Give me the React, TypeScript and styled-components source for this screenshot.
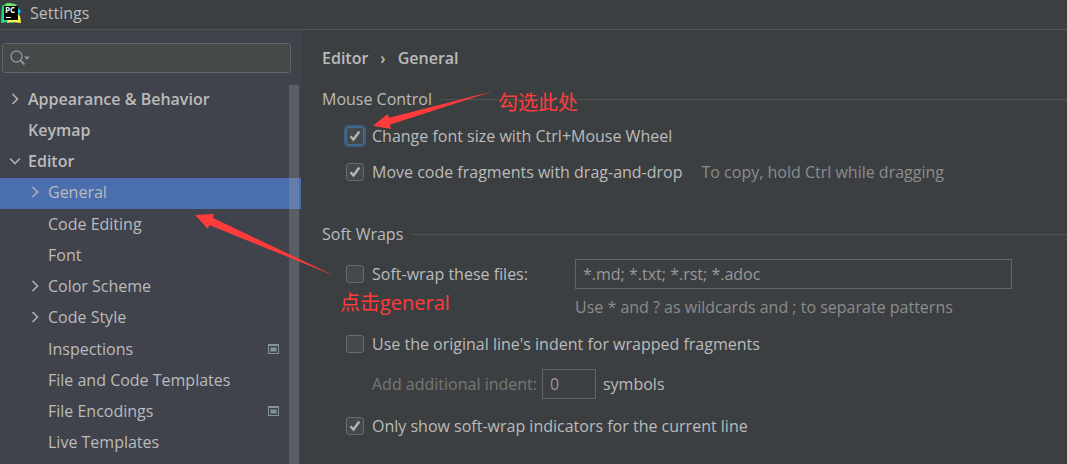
import React from "react";
import styled, { createGlobalStyle, css } from "styled-components";

const GlobalStyle = createGlobalStyle`
  * { box-sizing: border-box; }
  body {
    margin: 0;
    background: #3c3f41;
    color: #bbbbbb;
    font: 16px/20px "Open Sans", "Noto Sans CJK SC", sans-serif;
  }
  input, button { font: inherit; }
`;

const Window = styled.div`
  position: relative;
  display: flex;
  flex-direction: column;
  min-height: 100vh;
`;

const TitleBar = styled.header`
  display: flex;
  align-items: center;
  gap: 9px;
  height: 30px;
  padding: 0 0 4px 1px;
  border-bottom: 1px solid #515355;
`;

const Title = styled.h1`
  margin: 0;
  font-size: 16px;
  font-weight: 400;
`;

const Columns = styled.div`
  flex: 1;
  display: flex;
`;

const Sidebar = styled.nav`
  position: relative;
  flex: none;
  display: flex;
  flex-direction: column;
  width: 301px;
  background: #40434c;
`;

const SearchBox = styled.label`
  display: flex;
  align-items: center;
  height: 30px;
  margin: 13px 10px 11px 2px;
  padding-left: 7px;
  background: #45494a;
  border: 1px solid #646464;
  border-radius: 3px;
`;

const SearchInput = styled.input`
  flex: 1;
  min-width: 0;
  border: 0;
  outline: 0;
  background: transparent;
  color: inherit;
`;

const Tree = styled.ul`
  flex: 1;
  display: grid;
  grid-auto-rows: minmax(30px, 1fr);
  margin: 0;
  padding: 0 0 5px;
  list-style: none;
`;

const TreeItem = styled.li`
  display: grid;
`;

const TreeButton = styled.button<{ $level: number; $selected?: boolean }>`
  display: flex;
  align-items: center;
  width: 100%;
  padding: 0 22px 2px ${(p) => (p.$level ? 28 : 8)}px;
  border: 0;
  background: ${(p) => (p.$selected ? "#4b6eaf" : "transparent")};
  color: inherit;
  font-weight: ${(p) => (p.$level ? 400 : 600)};
  text-align: left;
`;

const ArrowSlot = styled.span`
  display: flex;
  width: 20px;
`;

const ItemName = styled.span`
  flex: 1;
`;

const ScrollThumb = styled.div`
  position: absolute;
  top: 55px;
  right: 2px;
  bottom: 0;
  width: 10px;
  background: rgba(166, 166, 166, 0.27);
`;

const Main = styled.main`
  flex: 1;
  min-width: 0;
  padding: 18px 0 18px 21px;
`;

const Breadcrumb = styled.div`
  display: flex;
  gap: 12px;
  font-weight: 600;
`;

const Section = styled.fieldset<{ $space: number }>`
  margin: ${(p) => p.$space}px 0 0;
  padding: 0;
  border: 0;
`;

const Legend = styled.legend`
  display: flex;
  align-items: center;
  gap: 8px;
  width: 100%;
  padding: 0;

  &::after {
    content: "";
    flex: 1;
    height: 1px;
    background: #515151;
  }
`;

const Row = styled.div<{ $space: number; $indent?: number }>`
  display: flex;
  align-items: center;
  margin-top: ${(p) => p.$space}px;
  padding-left: ${(p) => p.$indent ?? 24}px;
`;

const CheckLabel = styled.label`
  display: flex;
  align-items: center;
  gap: 8px;
  white-space: nowrap;
`;

const tick = css`
  background-image: url("data:image/svg+xml,%3Csvg xmlns='http://www.w3.org/2000/svg' viewBox='0 0 16 16'%3E%3Cpath d='M3.5 8.2l3 3.3 5.8-8' fill='none' stroke='%23b4b4b4' stroke-width='2.4'/%3E%3C/svg%3E");
`;

const CheckBox = styled.input<{ $focused?: boolean }>`
  appearance: none;
  flex: none;
  width: 18px;
  height: 18px;
  margin: 0;
  border: 1px solid #6b6b6b;
  border-radius: 3px;
  background-color: #43494a;

  &:checked { ${tick} }

  ${(p) =>
    p.$focused &&
    css`
      border-color: #466d94;
      box-shadow: 0 0 0 2px #3d6185;
    `}
`;

const Hint = styled.span<{ $dim?: boolean }>`
  color: ${(p) => (p.$dim ? "#777777" : "#8c8c8c")};
`;

const DragHint = styled(Hint)`
  margin-left: 19px;
`;

const PatternGrid = styled.div`
  display: grid;
  grid-template-columns: 229px minmax(0, 1fr);
  align-items: center;
  row-gap: 8px;
  margin: 15px 55px 0 0;
  padding-left: 24px;
`;

const PatternHint = styled(Hint)`
  grid-column: 2;
`;

const TextField = styled.input`
  width: 100%;
  height: 30px;
  padding: 0 7px;
  border: 1px solid #646464;
  background: transparent;
  color: #999999;
  outline: 0;
`;

const IndentField = styled(TextField)`
  width: 54px;
  margin: 0 7px 0 5px;
`;

const Note = styled.span`
  position: absolute;
  color: #ff3b3b;
  font: 20px/24px "Open Sans", "Noto Sans CJK SC", sans-serif;
  white-space: nowrap;
`;

const TickNote = styled(Note)`
  left: 498px;
  top: 91px;
`;

const ClickNote = styled(Note)`
  left: 340px;
  top: 291px;
`;

const Arrows = styled.svg`
  position: absolute;
  left: 0;
  top: 0;
  pointer-events: none;
`;

function Logo() {
  return (
    <svg width="20" height="20" viewBox="0 0 20 20" aria-hidden="true">
      <path d="M1 3 6 0l9 1 2 4v12l-5 3-6-1-6 1z" fill="#21d789" />
      <path d="M6 0l7 1 3 3H4z" fill="#7ee45a" />
      <path d="M16 4l4 4-2 4-3-4z" fill="#07c3f2" />
      <path d="M17 11l2 2 1 7-9-1-5 1 1-4h9z" fill="#fcf84a" />
      <path d="M3 3h14v14H3z" fill="#000" />
      <text x="4" y="10" fontSize="8" fontWeight="700" fill="#fff" fontFamily="Open Sans, sans-serif">PC</text>
      <path d="M5 14h5v1H5z" fill="#fff" />
    </svg>
  );
}

function SearchIcon() {
  return (
    <svg width="21" height="16" viewBox="0 0 21 16" fill="none" aria-hidden="true">
      <circle cx="6.5" cy="6.5" r="5.5" stroke="#8a949b" strokeWidth="1.4" />
      <path d="M10.5 10.5l4 4" stroke="#8a949b" strokeWidth="1.8" />
      <path d="M14 6.5h6l-3 3.5z" fill="#8a949b" />
    </svg>
  );
}

function Chevron({ open }: { open?: boolean }) {
  return (
    <svg width="14" height="14" viewBox="0 0 14 14" fill="none" stroke="#adadad" strokeWidth="1.7" aria-hidden="true">
      <path d={open ? "M2 4.5l5 5 5-5" : "M4.5 2l5 5-5 5"} />
    </svg>
  );
}

function ProjectIcon() {
  return (
    <svg width="11" height="10" viewBox="0 0 11 10" aria-hidden="true">
      <path d="M0 0h11v10H0zM1 2v7h9V2z" fill="#87939a" fillRule="evenodd" />
      <path d="M2 3h7v5H2z" fill="#5f6a73" />
      <path d="M3 4h5v3H3z" fill="#87939a" />
    </svg>
  );
}

type Item = { name: string; level: number; arrow?: "open" | "closed"; selected?: boolean; project?: boolean };

const items: Item[] = [
  { name: "Appearance & Behavior", level: 0, arrow: "closed" },
  { name: "Keymap", level: 0 },
  { name: "Editor", level: 0, arrow: "open" },
  { name: "General", level: 1, arrow: "closed", selected: true },
  { name: "Code Editing", level: 1 },
  { name: "Font", level: 1 },
  { name: "Color Scheme", level: 1, arrow: "closed" },
  { name: "Code Style", level: 1, arrow: "closed" },
  { name: "Inspections", level: 1, project: true },
  { name: "File and Code Templates", level: 1 },
  { name: "File Encodings", level: 1, project: true },
  { name: "Live Templates", level: 1 },
];

function Check({ label, checked, focused }: { label: string; checked?: boolean; focused?: boolean }) {
  return (
    <CheckLabel>
      <CheckBox type="checkbox" defaultChecked={checked} $focused={focused} />
      {label}
    </CheckLabel>
  );
}

export default function App() {
  return (
    <Window>
      <GlobalStyle />
      <TitleBar>
        <Logo />
        <Title>Settings</Title>
      </TitleBar>
      <Columns>
        <Sidebar>
          <SearchBox>
            <SearchIcon />
            <SearchInput type="text" aria-label="Search settings" />
          </SearchBox>
          <Tree>
            {items.map((item) => (
              <TreeItem key={item.name}>
                <TreeButton type="button" $level={item.level} $selected={item.selected}>
                  <ArrowSlot>{item.arrow && <Chevron open={item.arrow === "open"} />}</ArrowSlot>
                  <ItemName>{item.name}</ItemName>
                  {item.project && <ProjectIcon />}
                </TreeButton>
              </TreeItem>
            ))}
          </Tree>
          <ScrollThumb />
        </Sidebar>
        <Main>
          <Breadcrumb>
            <span>Editor</span>
            <span>›</span>
            <span>General</span>
          </Breadcrumb>
          <Section $space={21}>
            <Legend>Mouse Control</Legend>
            <Row $space={17}>
              <Check label="Change font size with Ctrl+Mouse Wheel" checked focused />
            </Row>
            <Row $space={16}>
              <Check label="Move code fragments with drag-and-drop" checked />
              <DragHint>To copy, hold Ctrl while dragging</DragHint>
            </Row>
          </Section>
          <Section $space={42}>
            <Legend>Soft Wraps</Legend>
            <PatternGrid>
              <Check label="Soft-wrap these files:" />
              <TextField type="text" aria-label="File patterns" defaultValue="*.md; *.txt; *.rst; *.adoc" />
              <PatternHint>Use * and ? as wildcards and ; to separate patterns</PatternHint>
            </PatternGrid>
            <Row $space={17}>
              <Check label="Use the original line's indent for wrapped fragments" />
            </Row>
            <Row $space={15} $indent={50}>
              <Hint as="label" htmlFor="indent" $dim>Add additional indent:</Hint>
              <IndentField id="indent" type="text" defaultValue="0" />
              <span>symbols</span>
            </Row>
            <Row $space={17}>
              <Check label="Only show soft-wrap indicators for the current line" checked />
            </Row>
          </Section>
        </Main>
      </Columns>
      <Arrows width="500" height="290" viewBox="0 0 500 290" fill="#ff3b3b" aria-hidden="true">
        <path d="M373 125.7 387.7 114l1.3 3.7L493 91.3l-103.3 33.4L391 129z" />
        <path d="M195 215l18.7-1-.7 4 122 58-125.7-51-1.6 3.7z" />
      </Arrows>
      <TickNote>勾选此处</TickNote>
      <ClickNote>点击general</ClickNote>
    </Window>
  );
}
